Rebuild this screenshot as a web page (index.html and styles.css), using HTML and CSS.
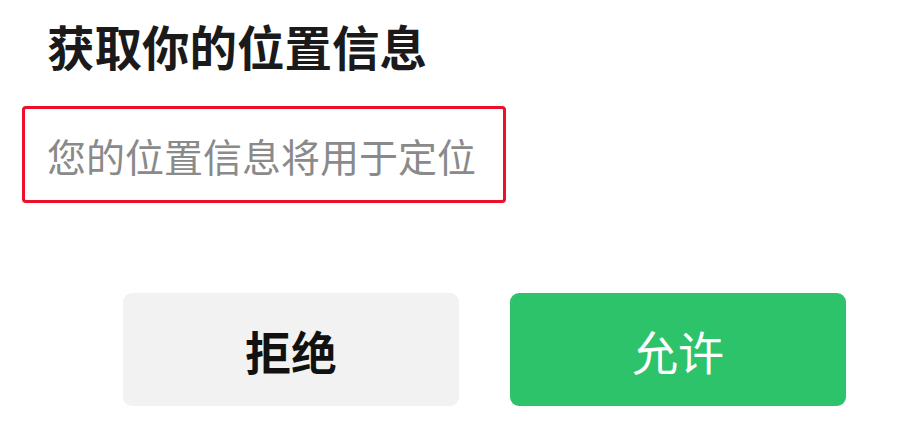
FILE: index.html
```html
<!DOCTYPE html>
<html lang="zh-CN">
<head>
  <meta charset="UTF-8">
  <meta name="viewport" content="width=device-width, initial-scale=1.0">
  <title>获取你的位置信息</title>
  <link rel="stylesheet" href="styles.css">
</head>
<body>
  <div class="dialog">
    <h2 class="dialog-title">获取你的位置信息</h2>

    <div class="dialog-desc">
      <span>您的位置信息将用于定位</span>
    </div>

    <div class="dialog-actions">
      <button type="button" class="btn btn-reject">拒绝</button>
      <button type="button" class="btn btn-allow">允许</button>
    </div>
  </div>
</body>
</html>
```

FILE: styles.css
```css
body {
  margin: 0;
  padding: 0;
  background-color: #fff;
  font-family: "Noto Sans CJK SC", "Noto Sans", sans-serif;
  color: #1a1a1a;
}

.dialog {
  width: 900px;
  height: 423px;
  box-sizing: border-box;
  padding: 16px 54px 0 22px;
}

.dialog-title {
  margin: 0 0 0 25px;
  font-size: 47.5px;
  line-height: 60px;
  font-weight: 700;
  color: #1a1a1a;
}

.dialog-desc {
  margin-top: 30px;
  width: 484px;
  height: 97px;
  box-sizing: border-box;
  border: 3px solid #ee0f2c;
  border-radius: 4px;
  padding-left: 22px;
  display: flex;
  align-items: center;
  font-size: 39px;
  color: #8a8a8a;
}

.dialog-actions {
  margin-top: 90px;
  display: flex;
  justify-content: flex-end;
  gap: 51px;
}

.btn {
  width: 336px;
  height: 113px;
  border: none;
  border-radius: 9px;
  font-family: "Noto Sans CJK SC", "Noto Sans", sans-serif;
  font-size: 46px;
  cursor: pointer;
  padding: 0;
}

.btn-reject {
  background-color: #f2f2f2;
  color: #111;
  font-weight: 700;
}

.btn-allow {
  background-color: #2dc36a;
  color: #fff;
  font-weight: 400;
}
```
